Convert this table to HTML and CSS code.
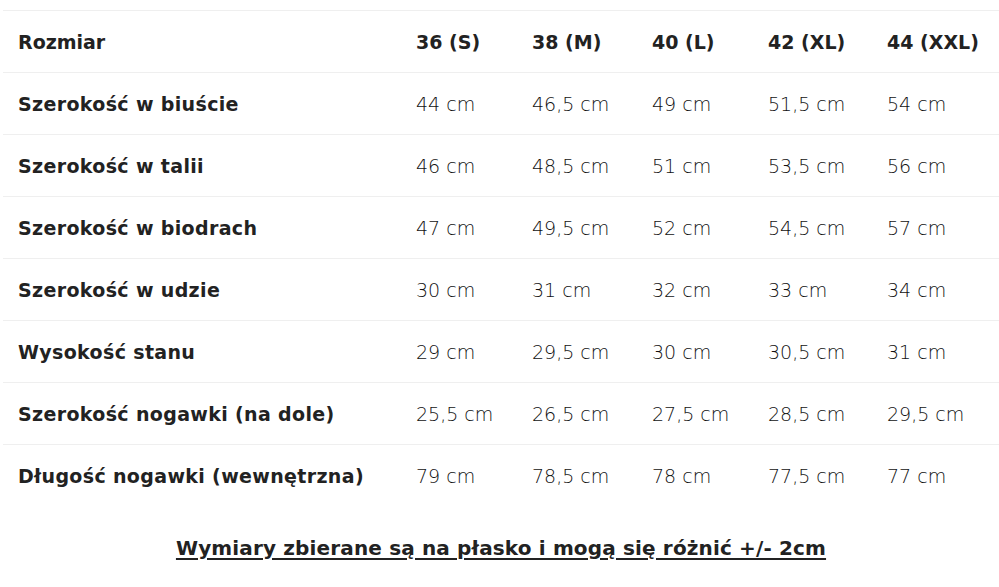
FILE: index.html
```html
<!DOCTYPE html>
<html lang="pl">
<head>
<meta charset="utf-8">
<title>Tabela rozmiarów</title>
<link rel="stylesheet" href="styles.css">
</head>
<body>
<main class="page">
  <table class="sizes">
    <colgroup>
      <col class="c-label"><col class="c-s"><col class="c-m"><col class="c-l"><col class="c-xl"><col class="c-xxl">
    </colgroup>
    <thead>
      <tr><th>Rozmiar</th><th>36 (S)</th><th>38 (M)</th><th>40 (L)</th><th>42 (XL)</th><th>44 (XXL)</th></tr>
    </thead>
    <tbody>
      <tr><th>Szerokość w biuście</th><td>44 cm</td><td>46,5 cm</td><td>49 cm</td><td>51,5 cm</td><td>54 cm</td></tr>
      <tr><th>Szerokość w talii</th><td>46 cm</td><td>48,5 cm</td><td>51 cm</td><td>53,5 cm</td><td>56 cm</td></tr>
      <tr><th>Szerokość w biodrach</th><td>47 cm</td><td>49,5 cm</td><td>52 cm</td><td>54,5 cm</td><td>57 cm</td></tr>
      <tr><th>Szerokość w udzie</th><td>30 cm</td><td>31 cm</td><td>32 cm</td><td>33 cm</td><td>34 cm</td></tr>
      <tr><th>Wysokość stanu</th><td>29 cm</td><td>29,5 cm</td><td>30 cm</td><td>30,5 cm</td><td>31 cm</td></tr>
      <tr><th>Szerokość nogawki (na dole)</th><td>25,5 cm</td><td>26,5 cm</td><td>27,5 cm</td><td>28,5 cm</td><td>29,5 cm</td></tr>
      <tr><th>Długość nogawki (wewnętrzna)</th><td>79 cm</td><td>78,5 cm</td><td>78 cm</td><td>77,5 cm</td><td>77 cm</td></tr>
    </tbody>
  </table>
  <p class="note">Wymiary zbierane są na płasko i mogą się różnić +/- 2cm</p>
</main>
</body>
</html>
```
FILE: styles.css
```css
html, body {
  margin: 0;
  padding: 0;
  background: #ffffff;
}
.page {
  padding: 10px 0 0 3px;
  font-family: "DejaVu Sans", "Open Sans", sans-serif;
  color: #222222;
}
.sizes {
  width: 996px;
  border-collapse: collapse;
  table-layout: fixed;
}
.c-label { width: 398px; }
.c-s { width: 116px; }
.c-m { width: 120px; }
.c-l { width: 116px; }
.c-xl { width: 119px; }
.c-xxl { width: 127px; }
.sizes th,
.sizes td {
  height: 61px;
  padding: 0 0 0 15px;
  text-align: left;
  vertical-align: middle;
  font-size: 19px;
  white-space: nowrap;
  border-top: 1px solid #efefef;
}
.sizes th {
  font-weight: 700;
  color: #222222;
}
.sizes tbody th {
  letter-spacing: 0.35px;
}
.sizes td {
  font-weight: 300;
  color: #111111;
}
.sizes tbody tr:last-child th,
.sizes tbody tr:last-child td {
  height: 62px;
}
.note {
  margin: 29px 0 0 0;
  text-align: center;
  font-size: 20px;
  font-weight: 700;
  letter-spacing: 0.15px;
  color: #222222;
  text-decoration: underline;
  text-decoration-thickness: 2px;
  text-underline-offset: 3px;
}
```
